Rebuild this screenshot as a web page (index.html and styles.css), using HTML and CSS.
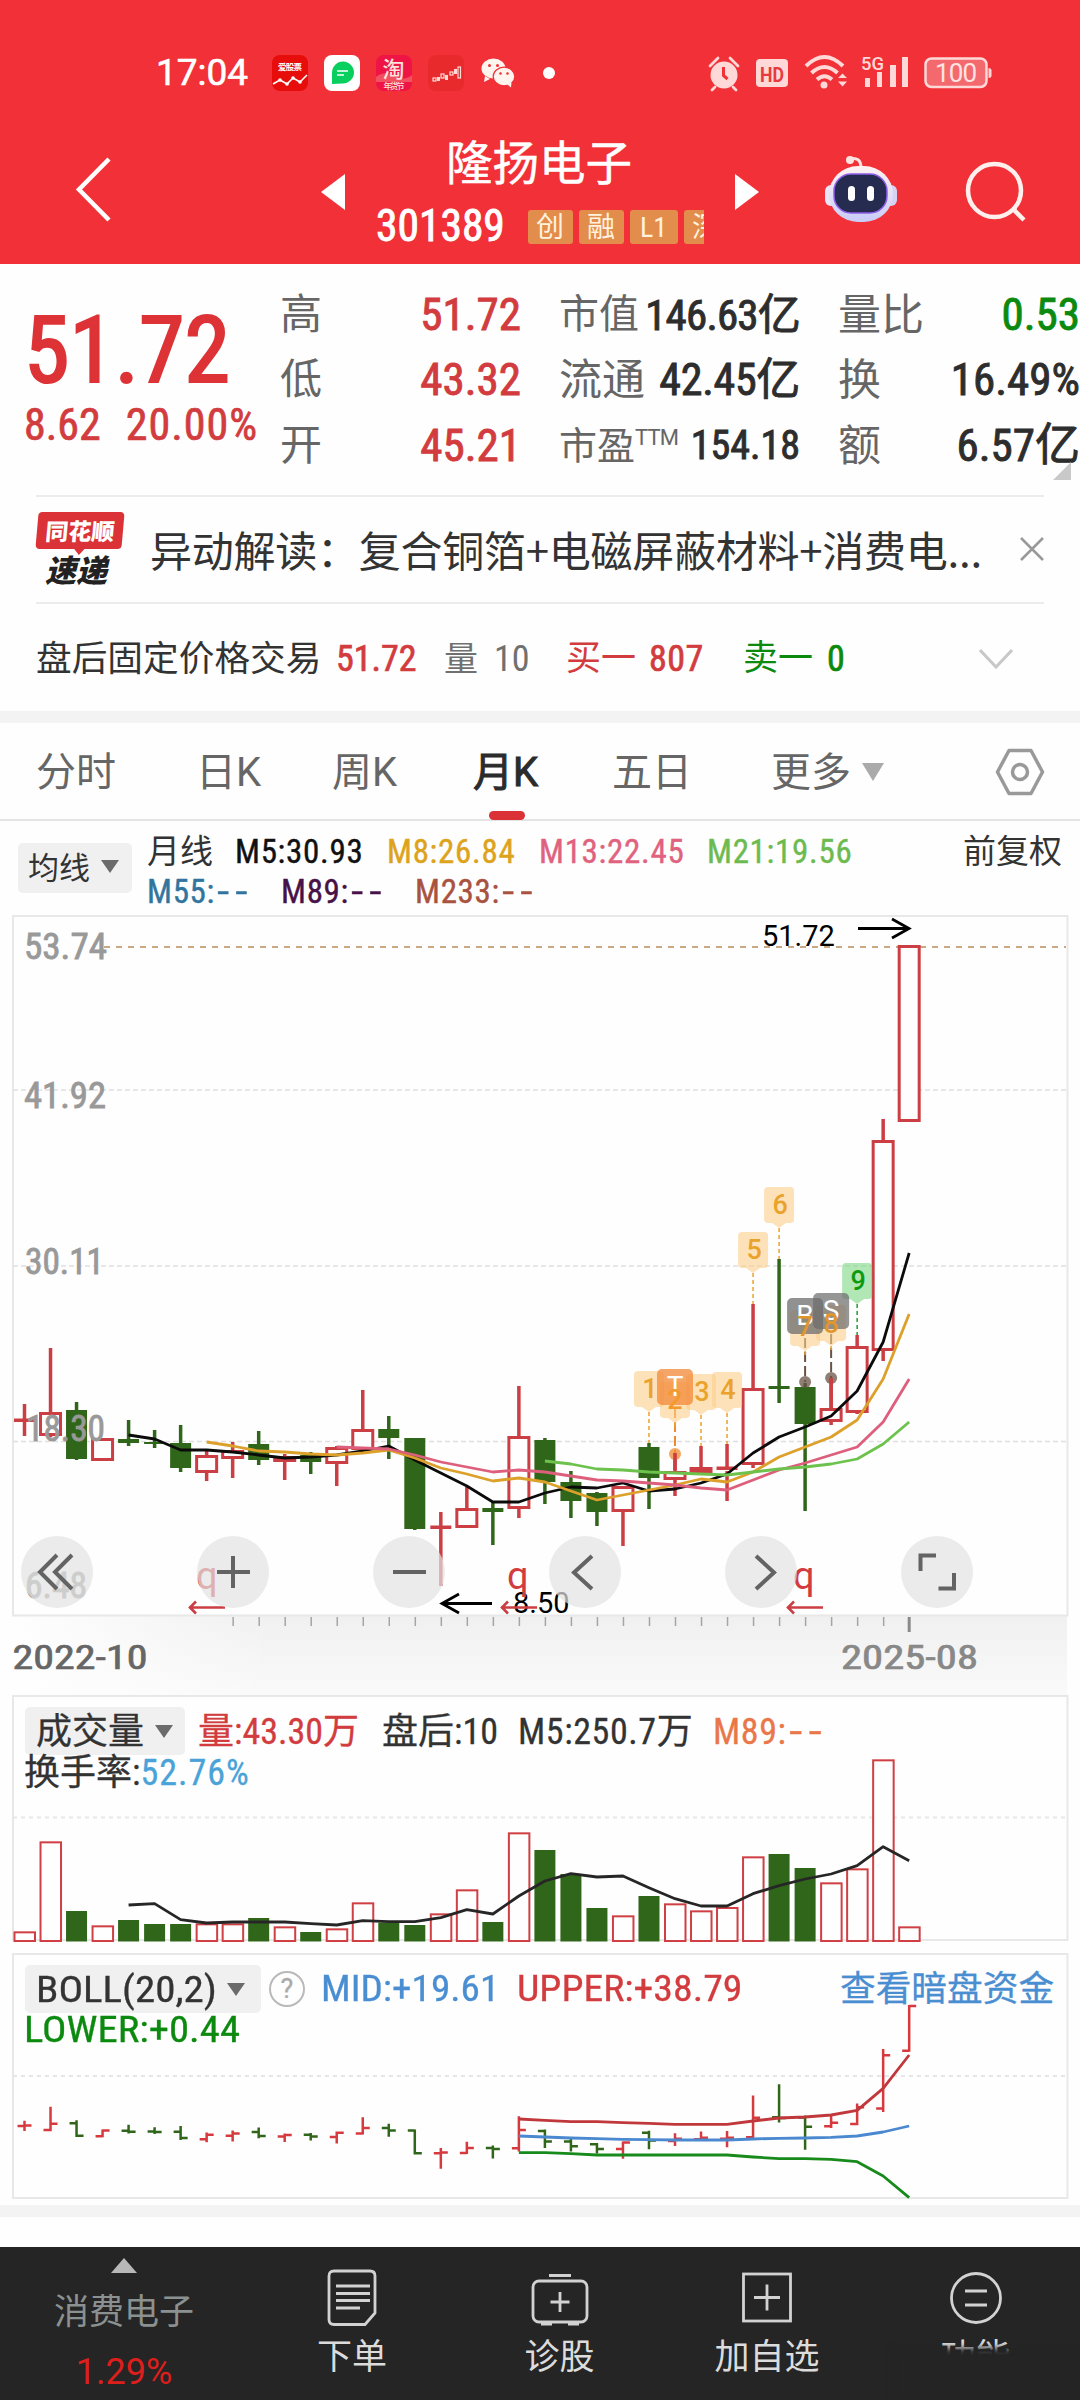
FILE: index.html
```html
<!DOCTYPE html>
<html lang="zh-CN">
<head>
<meta charset="utf-8">
<title>隆扬电子 301389</title>
<link rel="stylesheet" href="styles.css">
</head>
<body>
<div class="screen">
  <header class="header">
    <div class="status">
      <div class="status-left">
        <span class="clock">17:04</span>
        <svg class="app" viewBox="0 0 36 36"><rect width="36" height="36" rx="8" fill="#e60d0a"/><text class="app-name" x="6" y="14.5" textLength="24">爱股票</text><path d="M1 29l7-4 7 4 6-6 7 4 7-7" fill="none" stroke="#fff" stroke-width="1.6"/><g fill="#fff"><circle cx="8" cy="25" r="1.8"/><circle cx="15" cy="29" r="1.8"/><circle cx="21" cy="23" r="1.8"/><circle cx="28" cy="27" r="1.8"/></g></svg>
        <svg class="app" viewBox="0 0 36 36"><rect width="36" height="36" rx="8" fill="#fff"/><path d="M8 29V17.500A11 11 0 1 1 18.500 28.500Z" fill="#09cf5e"/><path d="M13 16h11M13 20h7" stroke="#fff" stroke-width="1.600"/></svg>
        <svg class="app" viewBox="0 0 36 36"><rect width="36" height="36" rx="8" fill="#ee1546"/><path d="M0 22q9-7 18-1t18-1v7H0z" fill="#f0505f"/><text class="tao" x="6.500" y="21.500">淘</text><text class="tao-sub" x="7.500" y="34" textLength="21">年货节</text></svg>
        <svg class="app" viewBox="0 0 36 36"><rect width="36" height="36" rx="8" fill="#e92a2c"/><g fill="none" stroke="#ffd9d4" stroke-width="1.200"><rect x="5" y="23" width="3" height="3"/><rect x="13" y="19" width="3" height="4"/><rect x="22" y="17" width="3" height="3"/><rect x="30" y="12" width="2.500" height="11"/></g><path d="M9 22h3v4H9zM17 20h3v5h-3zM26 14h3v5h-3z" fill="#ffd9d4"/></svg>
        <svg class="wechat" viewBox="0 0 34 30"><ellipse cx="12.500" cy="10.500" rx="12" ry="10" fill="#fff4ee"/><path d="M4 18l-1 6 6-3z" fill="#fff4ee"/><ellipse cx="23" cy="18.500" rx="10.800" ry="9.300" fill="#fff4ee" stroke="#f23037" stroke-width="1.200"/><path d="M26 26l4 3.500.500-5z" fill="#fff4ee"/><g fill="#f23037"><circle cx="8.500" cy="7.500" r="1.500"/><circle cx="16.500" cy="7.500" r="1.500"/><circle cx="19.500" cy="15.500" r="1.300"/><circle cx="26.500" cy="15.500" r="1.300"/></g></svg>
        <span class="more-dot"></span>
      </div>
      <svg class="status-right" viewBox="704 50 292 46">
        <g fill="#ffd8d8">
          <circle cx="724" cy="75" r="13.500"/><path d="M710 66l8-8M738 66l-8-8M715 87l-3 3M733 87l3 3" stroke="#ffd8d8" stroke-width="2.800" stroke-linecap="round"/><path d="M723.500 67v8.500l4 3.500" fill="none" stroke="#f23037" stroke-width="3"/>
          <rect x="756" y="59" width="32" height="28" rx="4"/>
          <circle cx="824" cy="85" r="3.500"/>
          <path d="M806 66q18.500-18 37 0M811.500 73q13-12 26 0M817 79.500q7.500-6.500 15 0" fill="none" stroke="#ffd8d8" stroke-width="4"/>
          <path d="M838 78l4.500-4.500 4.500 4.500zM838 81.500l4.500 5 4.500-5z"/>
          <path d="M865 78h5v9h-5zM877 72h5v15h-5zM890 65h6v22h-6zM902 57h6v30h-6z"/>
          <path d="M988.500 68q3 0 3 2.500v5q0 2.500-3 2.500z"/>
        </g>
        <rect x="925.500" y="58.500" width="61" height="28.500" rx="6" fill="#f4696e" stroke="#ffd8d8" stroke-width="2.500"/>
        <text class="hd" x="760" y="81.500" textLength="24" lengthAdjust="spacingAndGlyphs">HD</text>
        <text class="net" x="861" y="69.500" textLength="23" lengthAdjust="spacingAndGlyphs">5G</text>
        <text class="batt" x="935" y="82" textLength="42">100</text>
      </svg>
    </div>
    <div class="titlebar">
      <svg class="back" viewBox="0 0 40 66"><path d="M34 2L4 32.500 34 63" fill="none" stroke="#fff" stroke-width="4.500"/></svg>
      <i class="tri-left"></i>
      <div class="title">
        <div class="name">隆扬电子</div>
        <div class="code-row">
          <span class="code">301389</span>
          <div class="badges"><b>创</b><b>融</b><b class="wide">L1</b><b>深</b></div>
        </div>
      </div>
      <i class="tri-right"></i>
      <svg class="robot" viewBox="0 0 74 68">
        <defs><linearGradient id="shell" x2="0" y2="1"><stop offset="0" stop-color="#fff3f2"/><stop offset="1" stop-color="#c9ccf8"/></linearGradient></defs>
        <path d="M25 4q12-3 12 9" fill="none" stroke="#ffe3e1" stroke-width="3"/><circle cx="26" cy="5" r="4" fill="#ffe3e1"/>
        <rect x="1" y="30" width="12" height="21" rx="6" fill="#e9e4f8"/><rect x="61" y="30" width="12" height="21" rx="6" fill="#d6d2f5"/>
        <rect x="5" y="11" width="64" height="56" rx="29" fill="url(#shell)"/><rect x="10" y="19" width="53" height="39" rx="17" fill="#252c50" stroke="#8d5fe8" stroke-width="1.500"/>
        <rect x="24" y="31" width="7" height="15" rx="3.500" fill="#fff"/><rect x="43" y="31" width="7" height="15" rx="3.500" fill="#fff"/>
      </svg>
      <svg class="search" viewBox="0 0 62 62"><circle cx="29.500" cy="29.500" r="26.500" fill="none" stroke="#fff0ee" stroke-width="4.500"/><path d="M48 48l11 11" stroke="#fff0ee" stroke-width="4.500"/></svg>
    </div>
  </header>

  <section class="quote">
    <div class="price">
      <div class="last">51.72</div>
      <div class="chg"><span>8.62</span><span class="pct">20.00%</span></div>
    </div>
    <div class="ohlc">
      <div class="kv"><span>高</span><b class="red">51.72</b></div>
      <div class="kv"><span>低</span><b class="red">43.32</b></div>
      <div class="kv"><span>开</span><b class="red">45.21</b></div>
    </div>
    <div class="cap">
      <div class="kv"><span class="s40">市值</span><b class="tight">146.63亿</b></div>
      <div class="kv"><span class="s43">流通</span><b>42.45亿</b></div>
      <div class="kv"><span class="s38">市盈<sup>TTM</sup></span><b class="small">154.18</b></div>
    </div>
    <div class="ratio">
      <div class="kv"><span>量比</span><b class="green">0.53</b></div>
      <div class="kv"><span>换</span><b>16.49%</b></div>
      <div class="kv"><span>额</span><b>6.57亿</b></div>
      <i class="corner"></i>
    </div>
  </section>

  <section class="news">
    <div class="express"><div class="brand">同花顺</div><div class="sub">速递</div></div>
    <div class="headline">异动解读：复合铜箔+电磁屏蔽材料+消费电...</div>
    <svg class="close" viewBox="0 0 24 24"><path d="M1 1l22 22M23 1L1 23" stroke="#999" stroke-width="2.500"/></svg>
  </section>

  <section class="after">
    <span class="c1">盘后固定价格交易</span><span class="c2 red">51.72</span><span class="c3 gray">量</span><span class="c4 gray">10</span><span class="c5 red">买一</span><span class="c6 red">807</span><span class="c7 green">卖一</span><span class="c8 green">0</span>
    <svg class="chev" viewBox="0 0 34 20"><path d="M1 1l16 17L33 1" fill="none" stroke="#c8c8c8" stroke-width="3"/></svg>
  </section>

  <nav class="tabs">
    <span>分时</span><span>日K</span><span>周K</span><span class="on">月K</span><span>五日</span><span>更多<i class="caret big"></i></span>
    <svg class="hex" viewBox="0 0 50 48"><path d="M14 2.500h22L47.500 24 36 45.500H14L2.500 24z" fill="none" stroke="#999" stroke-width="3.500" stroke-linejoin="round"/><circle cx="25" cy="24" r="7.500" fill="none" stroke="#999" stroke-width="3.500"/></svg>
  </nav>

  <section class="ma">
    <div class="pill">均线<i class="caret"></i></div>
    <div class="ma-lines">
      <div class="row1"><span class="cn">月线</span><span class="k">M5:30.93</span><span class="gold">M8:26.84</span><span class="pink">M13:22.45</span><span class="lime">M21:19.56</span><span class="adj cn">前复权</span></div>
      <div class="row2"><span class="blue">M55:<i class="dash">--</i></span><span class="purple">M89:<i class="dash">--</i></span><span class="brown">M233:<i class="dash">--</i></span></div>
    </div>
  </section>

  <section class="kline">
    <svg id="kline" width="1080" height="782" viewBox="0 914 1080 782"></svg>
    <div class="tools">
      <button><svg viewBox="0 0 72 72"><path d="M36 19L19 36l17 17M51 19L34 36l17 17"/></svg></button>
      <button><svg viewBox="0 0 72 72"><path d="M36 20v32M20 36h33"/></svg></button>
      <button><svg viewBox="0 0 72 72"><path d="M20 36h33"/></svg></button>
      <button><svg viewBox="0 0 72 72"><path d="M43 20L25 36.500 43 53"/></svg></button>
      <button><svg viewBox="0 0 72 72"><path d="M31 20l18 16.500L31 53"/></svg></button>
      <button><svg viewBox="0 0 72 72"><path d="M19.500 35V19.500H35M53 37v15.500H37.500"/></svg></button>
    </div>
  </section>

  <section class="panel vol">
    <svg id="volume" width="1080" height="256" viewBox="0 1694 1080 256"></svg>
    <div class="legend">
      <div class="vrow1"><span class="pill">成交量<i class="caret"></i></span><span class="red">量:43.30万</span><span>盘后:10</span><span class="ls">M5:250.7万</span><span class="orange ls">M89:<i class="dash">--</i></span></div>
      <div class="lrow2">换手率:<span class="sky">52.76%</span></div>
    </div>
  </section>

  <section class="panel boll">
    <svg id="boll" width="1080" height="254" viewBox="0 1950 1080 254"></svg>
    <div class="legend">
      <div class="brow1"><span class="pill"><span class="stretch s-boll">BOLL(20,2)</span><i class="caret"></i></span><em>?</em><span class="azure stretch s-mid">MID:+19.61</span><span class="red stretch s-up">UPPER:+38.79</span><span class="link">查看暗盘资金</span></div>
      <div class="lrow2 green"><span class="stretch s-low">LOWER:+0.44</span></div>
    </div>
  </section>
  <div class="band"></div>

  <footer class="footer">
    <div class="sector"><i class="up"></i><span>消费电子</span><b>1.29%</b></div>
    <div class="item"><svg viewBox="0 0 60 58"><path d="M12 2h36q5 0 5 5v37L43 55.500H12q-5 0-5-5V7q0-5 5-5z"/><path d="M14 17h34M14 24.500h34M14 31.500h34M14 39h24"/></svg><span>下单</span></div>
    <div class="item"><svg viewBox="0 0 60 58"><rect x="3" y="12" width="54" height="41" rx="6"/><path d="M19 6.500h22M30 23v20M20.500 33h19M11 55h11M38 55h11"/></svg><span>诊股</span></div>
    <div class="item"><svg viewBox="0 0 60 58"><rect x="6.500" y="5" width="47" height="47"/><path d="M30 15.500v26M17 28.500h26"/></svg><span>加自选</span></div>
    <div class="item"><svg viewBox="0 0 60 58"><circle cx="30" cy="29" r="24.500"/><path d="M19 22h22M19 36h22"/></svg><span>功能</span></div>
    <div class="smudge"></div>
  </footer>
</div>
<script src="charts.js"></script>
</body>
</html>
```
FILE: styles.css
```css
* { box-sizing: border-box; }
body { margin: 0; background: #fff; }
.screen { width: 1080px; height: 2400px; overflow: hidden; display: flex; flex-direction: column; background: #fefefe; color: #333; font-family: "Roboto Condensed", "Noto Sans CJK SC", sans-serif; }
i, em { font-style: normal; }
b { font-weight: 400; }
svg { display: block; flex: none; }
span { white-space: nowrap; }
.red { color: #d23c3e !important; }
.green { color: #0c8a10 !important; }
.gray { color: #707070; }
.gold { color: #dda31b; }
.pink { color: #e0627e; }
.lime { color: #6dbb50; }
.blue { color: #31759f; }
.purple { color: #471247; }
.brown { color: #a9523f; }
.orange { color: #e9774a; }
.sky { color: #4aa3d8; letter-spacing: 1px; }
.azure { color: #4a8ed2; }

/* header */
.header { height: 264px; background: #f23037; color: #fff; }
.status { height: 96px; padding: 50px 84px 0 156px; display: flex; justify-content: space-between; }
.status-left { display: flex; align-items: center; gap: 16px; height: 46px; }
.clock { width: 100px; font: 400 37px/46px Roboto, sans-serif; -webkit-text-stroke: .6px; }
.app { width: 36px; height: 36px; }
.app-name { font: 700 8.500px "Noto Sans CJK SC"; fill: #fff; }
.tao { font: 500 22px "Noto Sans CJK SC"; fill: #fde3dc; }
.tao-sub { font: 500 8.500px "Noto Sans CJK SC"; fill: #fde3dc; }
.wechat { width: 34px; height: 30px; margin-left: 1px; }
.more-dot { width: 12px; height: 12px; border-radius: 50%; background: #fff; margin-left: 12px; }
.status-right { width: 292px; height: 46px; }
.hd { font: 700 21px Roboto; fill: #e8393f; }
.net { font: 500 18px Roboto; fill: #ffd8d8; }
.batt { font: 400 26px Roboto; fill: #ffe3e3; }
.titlebar { height: 168px; padding-left: 75px; display: flex; align-items: flex-start; }
.back { width: 40px; height: 66px; margin-top: 61px; }
.tri-left, .tri-right { border: 18px solid transparent; margin-top: 78px; }
.tri-left { border-left: 0; border-right: 24px solid #fff; margin-left: 206px; }
.tri-right { border-right: 0; border-left: 24px solid #fff; margin-left: 30px; }
.title { width: 328px; margin-left: 31px; margin-right: 1px; padding-top: 39px; }
.name { font-size: 46.500px; line-height: 58px; text-align: center; padding-right: 2px; -webkit-text-stroke: .5px; }
.code-row { display: flex; align-items: center; margin-top: 14px; height: 40px; }
.code { width: 152px; font: 400 43.500px/40px "Roboto Condensed"; -webkit-text-stroke: .9px; }
.badges { width: 177px; display: flex; gap: 6px; overflow: hidden; }
.badges b { flex: none; width: 45px; height: 34px; border-radius: 3px; background: #e38d4c; color: #fff2de; font-size: 28px; line-height: 36px; text-align: center; }
.badges .wide { width: 48px; }
.robot { width: 74px; height: 68px; margin: 59px 0 0 65px; }
.search { width: 62px; height: 62px; margin: 65px 0 0 67px; }

/* quote grid */
.quote { height: 231px; display: grid; grid-template-columns: 280px 241px 279px 280px; padding-top: 18px; }
.price { padding-left: 24px; color: #dd3336; }
.last { font-size: 92px; line-height: 92px; margin-top: 23px; -webkit-text-stroke: 2.200px; }
.chg { display: flex; gap: 25px; font-size: 44px; line-height: 50px; margin-top: 3px; color: #d23c3e; -webkit-text-stroke: .7px; }
.pct { letter-spacing: 1px; }
.kv { display: flex; justify-content: space-between; align-items: center; height: 65.500px; }
.kv span { font-size: 42px; line-height: 64px; color: #666; }
.kv .s40 { font-size: 40px; }
.kv .s43 { font-size: 43px; }
.kv .s38 { font-size: 38px; }
.kv b { font-size: 45px; line-height: 64px; color: #2d2d2d; white-space: nowrap; -webkit-text-stroke: .9px; }
.ratio .kv span { font-size: 43px; }
.cap { padding-left: 38px; }
.cap .kv b { font-size: 44px; letter-spacing: -.3px; }
.cap .kv b.tight { font-size: 43px; letter-spacing: -.8px; }
.cap .kv b.small { font-size: 40px; letter-spacing: 0; }
.cap sup { font-size: 22px; vertical-align: 14px; line-height: 1; font-family: Roboto; letter-spacing: -.8px; }
.ratio { padding-left: 38px; position: relative; }
.corner { position: absolute; right: 9px; bottom: 15px; border: solid transparent; border-width: 0 0 18px 18px; border-bottom-color: #c9c9c9; }

/* news and after-hours rows */
.news { height: 109px; margin: 0 36px; border: solid #ececec; border-width: 2px 0; display: flex; align-items: center; }
.express { width: 90px; }
.brand { position: relative; width: 86px; height: 37px; background: #da3236; color: #fff; border-radius: 4px; transform: skewX(-5deg); font: 900 23px/36px "Noto Sans CJK SC"; text-align: center; margin-left: 1px; }
.brand::after { content: ""; position: absolute; left: 38px; top: 36px; border: solid transparent; border-width: 7px 6px 0; border-top-color: #da3236; }
.sub { font: italic 900 31px/34px "Noto Sans CJK SC"; margin: 3px 0 0 9px; color: #222; }
.headline { font: 400 42px/60px "Noto Sans CJK SC"; width: 842px; margin-left: 24px; white-space: nowrap; letter-spacing: -.25px; }
.close { width: 24px; height: 24px; margin-left: 29px; }
.after { height: 108px; padding: 3px 0 0 36px; display: flex; align-items: center; font-size: 36px; line-height: 50px; }
.after span { flex: none; }
.c1 { width: 300px; font-size: 35.700px; }
.c2 { width: 108px; }
.c2, .c6, .c8 { -webkit-text-stroke: .7px; }
.c3 { width: 50px; font-size: 34px; }
.c4 { width: 72px; }
.c5 { width: 83px; font-size: 35px; }
.c6 { width: 94px; letter-spacing: .500px; }
.c7 { width: 84px; font-size: 35px; }
.c8 { width: 152px; }
.chev { width: 34px; height: 20px; }

/* tabs */
.tabs { height: 110px; border-top: 12px solid #f3f3f3; border-bottom: 2px solid #e4e4e4; display: grid; grid-template-columns: 160px 136px 141px 139px 159px 223px 50px; padding-left: 36px; font: 40px/100px Roboto, "Noto Sans CJK SC"; color: #666; align-items: center; }
.tabs span { height: 97px; }
.tabs .on { color: #2b2b2b; position: relative; -webkit-text-stroke: 1px; }
.tabs .on::after { content: ""; position: absolute; left: 16px; bottom: 0; width: 36px; height: 9px; border-radius: 5px; background: #da3236; }
.hex { width: 50px; height: 48px; margin-left: 1px; }
.caret { display: inline-block; border: solid transparent; border-width: 13px 9.500px 0; border-top-color: #6b6b6b; margin-left: 11px; vertical-align: 6px; }
.caret.big { border-width: 18px 11.500px 0; border-top-color: #aaa; vertical-align: 5px; }

/* moving average legend */
.ma { height: 93px; display: flex; padding-left: 18px; }
.pill { background: #f0f0f0; border-radius: 5px; white-space: nowrap; }
.ma .pill { width: 114px; height: 50px; margin-top: 22px; padding-left: 10px; font-size: 31px; line-height: 52px; }
.ma-lines { margin-left: 15px; padding-top: 11px; font-size: 33px; line-height: 40px; letter-spacing: .700px; -webkit-text-stroke: .4px; }
.cn { letter-spacing: 0; -webkit-text-stroke: 0; }
.row1 { display: grid; grid-template-columns: 88px 152px 152px 168px 256px 110px; }
.row2 { display: grid; grid-template-columns: 134px 134px 140px; }
.k { color: #111; }
.dash { display: inline-block; transform: scaleX(1.500); transform-origin: left; letter-spacing: 4px; margin-left: 2px; }

/* charts */
.kline { position: relative; height: 780px; }
.kline > svg { width: 1080px; height: 782px; }
.tools { position: absolute; left: 21px; top: 622px; display: flex; gap: 104px; }
.tools button { width: 72px; height: 72px; padding: 0; border: 0; border-radius: 50%; background: rgba(226, 226, 226, .7); }
.tools path { fill: none; stroke: #636363; stroke-width: 4; }
.panel { position: relative; }
.vol { height: 256px; }
.boll { height: 255px; }
.legend { position: absolute; left: 25px; top: 13px; font-size: 36px; line-height: 50px; -webkit-text-stroke: .3px; }
.vrow1 { display: grid; grid-template-columns: 173px 184px 136px 195px 130px; }
.vrow1 .pill { width: 160px; height: 48px; padding-left: 11px; }
.ls { letter-spacing: .600px; }
.lrow2 { line-height: 32px; white-space: nowrap; margin-left: -1px; }
.boll .legend { top: 14px; }
.brow1 { display: grid; grid-template-columns: 244px 52px 196px 323px 220px; align-items: center; }
.brow1 .pill { width: 236px; height: 48px; padding-left: 11px; }
.brow1 em { width: 36px; height: 36px; border: 2px solid #b9b9b9; border-radius: 50%; color: #aaa; font: 400 27px/32px Roboto; text-align: center; }
.stretch { display: inline-block; transform-origin: left center; }
.s-boll { transform: scaleX(1.140); width: 180px; }
.s-mid { transform: scaleX(1.090); }
.s-up { transform: scaleX(1.105); }
.s-low { transform: scaleX(1.130); }
.link { color: #4a8ed2; font-size: 35.700px; }
.band { height: 12px; background: #f3f3f3; flex: none; }
.axis { font: 400 36px "Roboto Condensed"; fill: #999; stroke: #999; stroke-width: .8px; }
.date { font: 400 34px "Roboto Condensed"; stroke-width: .7px; }
.mark { font: 400 29px Roboto; fill: #000; }
.q { font: 400 38px Roboto; fill: #d23c3e; }
.tagno { font: 500 27px Roboto; text-anchor: middle; }
.tagbs { font: 400 28px Roboto; text-anchor: middle; fill: #fff; }

/* bottom bar */
.footer { position: relative; flex: none; height: 153px; margin-top: 30px; background: #252525; color: #dcdcdc; display: grid; grid-template-columns: 248px 208px 207px 208px 209px; font-size: 35px; }
.sector { display: flex; flex-direction: column; align-items: center; color: #8b9190; }
.up { border: solid transparent; border-width: 0 13px 15px; border-bottom-color: #b8b8b8; margin-top: 11px; }
.sector span { line-height: 50px; margin-top: 15px; }
.sector b { color: #dc1f1c; font: 400 36px/50px Roboto; margin-top: 9px; }
.item { display: flex; flex-direction: column; align-items: center; padding-top: 22px; }
.item svg { width: 60px; height: 58px; }
.item path, .item rect, .item circle { fill: none; stroke: #d2d2d2; stroke-width: 2.800; }
.item span { line-height: 50px; margin-top: 6px; }
.smudge { position: absolute; left: 890px; top: 101px; width: 200px; height: 56px; background: #242424; filter: blur(3px); }
```
FILE: charts.js
```js
const STEP = 26.02, X0 = 24.5;
const x = i => X0 + i * STEP;
// [up?, high, bodyTop, bodyBottom, low] in chart pixels
const candles = [
  [1,1404,1419,1421,1436],[1,1348,1412,1436,1437],[0,1402,1410,1459,1460],[1,1438,1438,1461,1461],
  [0,1420,1439,1443,1446],[0,1430,1442,1444,1448],[0,1425,1443,1468,1472],[1,1450,1455,1473,1481],
  [1,1442,1450,1459,1478],[0,1431,1444,1460,1465],[1,1454,1456,1462,1480],[0,1452,1455,1462,1474],
  [1,1446,1447,1464,1486],[1,1390,1429,1450,1450],[0,1416,1429,1438,1459],[0,1438,1438,1529,1530],
  [1,1512,1526,1529,1586],[1,1487,1508,1528,1528],[0,1502,1508,1512,1545],[1,1386,1436,1509,1518],
  [0,1438,1440,1482,1504],[0,1471,1482,1501,1518],[0,1492,1493,1512,1526],[1,1486,1486,1512,1546],
  [0,1443,1447,1478,1509],[1,1453,1471,1480,1496],[1,1446,1467,1473,1473],[1,1444,1467,1471,1501],
  [1,1304,1388,1465,1468],[0,1259,1386,1389,1403],[0,1383,1387,1424,1511],[1,1378,1408,1422,1425],
  [1,1335,1346,1413,1414],[1,1119,1140,1351,1361],[1,945,945,1122,1122]];
const averages = [
  ['#0b0b0b', 4, [1435,1439,1450,1450,1452,1455,1458,1457,1455,1451,1446,1460,1473,1486,1502,1502,1493,1487,1488,1483,1491,1489,1483,1474,1453,1437,1427,1416,1391,1342,1253]],
  ['#dda02a', 7, [1442,1446,1451,1452,1454,1455,1453,1450,1458,1468,1474,1481,1478,1482,1491,1500,1495,1490,1485,1479,1482,1472,1457,1447,1437,1420,1379,1314]],
  ['#de5f7c', 12, [1447,1448,1449,1455,1462,1467,1472,1470,1472,1476,1480,1481,1483,1485,1488,1490,1480,1470,1463,1455,1447,1422,1379]],
  ['#6cc24c', 20, [1461,1464,1469,1470,1472,1473,1474,1475,1472,1469,1467,1464,1459,1444,1422]]];
const volumes = [754,484,693,736,720,732,732,730,730,714,739,756,745,667,728,735,700,628,726,457,510,582,684,706,648,670,691,681,529,522,564,607,565,238,739];
const volMa = [675,671,719,729,726,726,726,731,735,722,725,725,713,689,702,648,603,581,591,588,623,656,678,678,641,617,597,582,557,500,542];
const upper = [537,541,545,545,548,550,553,553,553,543,534,531,525,511,445,345];
const mid = [588,591,594,596,598,599,600,600,600,597,595,594,592,588,576,558];
const lower = [638,638,641,645,645,645,645,645,645,651,656,656,658,665,708,773];

const RED = '#cb3e44', GREEN = '#30661a';
const rect = (a, b, w, h, attr) => `<rect x="${a}" y="${b}" width="${w}" height="${h}" ${attr}/>`;
const line = (x1, y1, x2, y2, attr) => `<path d="M${x1} ${y1}L${x2} ${y2}" fill="none" ${attr}/>`;
const poly = (start, ys, color, w) => `<polyline points="${ys.map((y, i) => x(start + i) + ',' + y).join(' ')}" fill="none" stroke="${color}" stroke-width="${w}" stroke-linejoin="round"/>`;
const text = (cls, tx, ty, s, attr = '') => `<text class="${cls}" x="${tx}" y="${ty}" ${attr}>${s}</text>`;

// main panel
let k = '<defs><linearGradient id="ax" x2="0" y2="1"><stop offset="0" stop-color="#f0f0f0"/><stop offset="1" stop-color="#fafafa"/></linearGradient><linearGradient id="fade"><stop offset="0" stop-color="#fefefe"/><stop offset="1" stop-color="#fefefe" stop-opacity="0"/></linearGradient></defs>';
k += rect(13, 1616, 1054, 80, 'fill="url(#ax)"') + rect(13, 1616, 260, 80, 'fill="url(#fade)"');
k += rect(13, 916, 1054.5, 699.5, 'fill="#fefefe" stroke="#e8e8e8" stroke-width="2"');
for (const y of [1090, 1266, 1441.5]) k += line(13, y, 1066, y, 'stroke="#e0e0e0" stroke-width="1.500" stroke-dasharray="5 3"');
k += line(104, 947, 1066, 947, 'stroke="#c9a983" stroke-width="2" stroke-dasharray="6 6"');
candles.forEach(([up, h, t, b, l], i) => {
  const c = x(i);
  if (up) {
    if (h < t) k += line(c, h, c, t, `stroke="${RED}" stroke-width="3.500"`);
    if (l > b) k += line(c, b, c, l, `stroke="${RED}" stroke-width="3.500"`);
    if (b - t < 5) k += rect(c - 10.5, t - .5, 21, 3.5, `fill="${RED}"`);
    else k += rect(c - 10, t + 1.5, 20, b - t - 3, `fill="#fefefe" stroke="${RED}" stroke-width="3"`);
  } else {
    k += line(c, h, c, l, `stroke="${GREEN}" stroke-width="3.500"`) + rect(c - 10.5, t, 21, b - t, `fill="${GREEN}"`);
  }
});
[['53.74',959,24,83],['41.92',1107.5,24,82],['30.11',1274,25,79],['18.30',1440.5,26,79],['6.48',1598,25,62]].forEach(([s, y, tx, w]) => k += text('axis', tx, y, s, `textLength="${w}" lengthAdjust="spacingAndGlyphs"`));
averages.forEach(([c, s, ys]) => k += poly(s, ys, c, 2.8));

// signal tags: index, top, label, background, text colour, end of tail
const tag = (i, top, label, bg, col, end) => {
  const c = x(i);
  k += line(c, top + 41, c, end, `stroke="${col}" stroke-width="1.500" stroke-dasharray="4 3"`);
  k += `<path d="M${c - 11} ${top}h22q4 0 4 4v28q0 4-4 4h-4l-7 5-7-5h-4q-4 0-4-4v-28q0-4 4-4z" fill="${bg}"/>`;
};
const AMBER = 'rgba(252,206,138,.6)', AT = '#eaa22c';
const badge = (i, top, s, bg) => { k += rect(x(i) - 18, top, 36, 36, `rx="5" fill="${bg}"`) + text('tagbs', x(i), top + 27, s); };
const pinline = (i, y1, y2, c) => { k += line(x(i), y1, x(i), y2, `stroke="${c}" stroke-width="2" stroke-dasharray="10 4"`) + `<circle cx="${x(i)}" cy="${y2}" r="6" fill="${c}" fill-opacity=".75"/>`; };
pinline(25, 1408, 1454, '#ee8b30'); pinline(30, 1338, 1382, '#6a5345'); pinline(31, 1334, 1378, '#6a5345');
[[25,1453,1470],[31,1378,1408]].forEach(([i,a,b]) => k += line(x(i), a, x(i), b, `stroke="${RED}" stroke-width="3.500"`));
[[24,1371,'1',1443],[26,1374,'3',1446],[27,1372,'4',1444],[28,1232,'5',1304],[29,1187,'6',1259]].forEach(([i, t, s, e]) => {
  tag(i, t, s, AMBER, AT, e); k += text('tagno', x(i) + 1, t + 27, s, `fill="${AT}"`);
});
tag(32, 1263, '9', 'rgba(125,214,131,.6)', '#259a33', 1335); k += text('tagno', x(32) + 1, 1290, '9', 'fill="#0c9a10"');
tag(25, 1382, '2', AMBER, AT, 1430); badge(25, 1369, 'T', 'rgba(244,140,62,.78)');
k += text('tagno', x(25), 1409, '2', 'fill="#f39a2c"');
tag(30, 1310, '7', AMBER, AT, 1355); tag(31, 1305, '8', AMBER, AT, 1350);
badge(30, 1298, 'B', 'rgba(110,110,110,.76)'); badge(31, 1293, 'S', 'rgba(110,110,110,.72)');
k += text('tagno', x(30), 1336, '7', 'fill="#e0962c"') + text('tagno', x(31), 1333, '8', 'fill="#e0962c"');

k += text('mark', 762, 946, '51.72') + line(858, 928.5, 908, 928.5, 'stroke="#000" stroke-width="3"') + '<path d="M892 919l17 9.500-17 9.500" fill="none" stroke="#000" stroke-width="2.800"/>';
k += text('mark', 513, 1612.5, '8.50') + line(442, 1603.5, 492, 1603.5, 'stroke="#000" stroke-width="3"') + '<path d="M459 1594l-17 9.500 17 9.500" fill="none" stroke="#000" stroke-width="2.800"/>';
[[196, 189], [507, 501], [793, 787]].forEach(([qx, ax]) => k += text('q', qx, 1589, 'q') + `<path d="M${ax} 1607.500H${ax + 36}M${ax + 7} 1601.500l-6 6 6 6" fill="none" stroke="${RED}" stroke-width="2.600"/>`);
for (let i = 8; i < 34; i++) k += line(x(i) + .5, 1617, x(i) + .5, 1626, 'stroke="#a5a5a5" stroke-width="1.500"');
k += line(x(34), 1617, x(34), 1632, 'stroke="#8a8a8a" stroke-width="3"');
k += text('date', 12.5, 1669, '2022-10', 'textLength="135" lengthAdjust="spacingAndGlyphs" fill="#666" stroke="#666"') + text('date', 841, 1669, '2025-08', 'textLength="137" lengthAdjust="spacingAndGlyphs" fill="#888" stroke="#888"');
document.getElementById('kline').innerHTML = k;

// volume panel
let v = rect(13, 1696, 1054.5, 244, 'fill="#fefefe" stroke="#e8e8e8" stroke-width="2"') + line(13, 1817.5, 1066, 1817.5, 'stroke="#e6e6e6" stroke-width="2" stroke-dasharray="4 4"');
volumes.forEach((t, i) => {
  const y = 1680 + t / 3, c = x(i);
  v += candles[i][0] ? rect(c - 10, y + 1, 20.5, 1940 - y, 'fill="#fefefe" stroke="#cf3f44" stroke-width="2"') : rect(c - 10.5, y, 21, 1941.5 - y, `fill="${GREEN}"`);
});
v += poly(4, volMa.map(t => 1680 + t / 3), '#262626', 2.8);
document.getElementById('volume').innerHTML = v;

// Bollinger panel
let b = rect(13, 1954, 1054.5, 244, 'fill="#fefefe" stroke="#e8e8e8" stroke-width="2"') + line(13, 2076, 1066, 2076, 'stroke="#e6e6e6" stroke-width="2" stroke-dasharray="4 4"');
const py = p => 2006 + (p - 945) * .2523;
candles.forEach(([up, h, t, bt, l], i) => {
  const c = x(i), col = up ? '#d63a3e' : GREEN, o = py(up ? bt : t), cl = py(up ? t : bt);
  b += `<path d="M${c} ${py(h) - 1}V${py(l) + 1}M${c - 7} ${o}H${c}M${c} ${cl}H${c + 7}" fill="none" stroke="${col}" stroke-width="2.500"/>`;
});
const off = a => a.map(t => 1940 + t / 3);
b += poly(19, off(upper), '#c0383c', 2.8) + poly(19, off(mid), '#4a88cf', 2.8) + poly(19, off(lower), '#178a1b', 2.8);
document.getElementById('boll').innerHTML = b;
```
